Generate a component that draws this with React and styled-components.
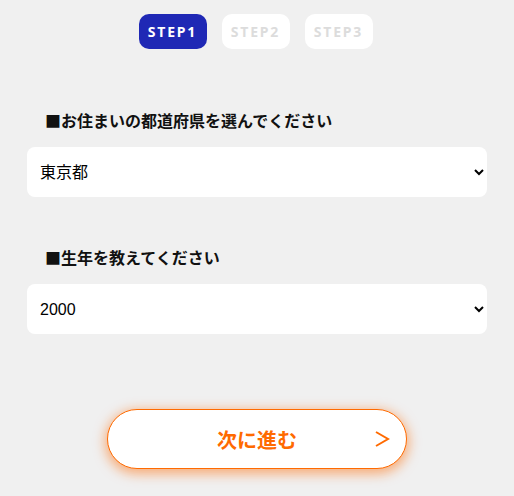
import React from 'react';
import styled, { createGlobalStyle } from 'styled-components';

const Global = createGlobalStyle`
  html, body {
    margin: 0;
    background: #f0f0f0;
    font-family: "Liberation Sans", "Noto Sans CJK JP", sans-serif;
  }
`;

const Page = styled.div`
  width: 514px;
  height: 496px;
  box-sizing: border-box;
  padding: 14px 27px 0 27px;
  display: flex;
  flex-direction: column;
`;

const Steps = styled.div`
  display: flex;
  justify-content: center;
  gap: 15px;
  margin-left: -3px;
`;

const Step = styled.div`
  width: 68px;
  height: 35px;
  border-radius: 10px;
  display: flex;
  align-items: center;
  justify-content: center;
  background: ${p => (p.$active ? '#1f28b5' : '#ffffff')};
  color: ${p => (p.$active ? '#ffffff' : '#dcdcdc')};
  font-family: "Noto Sans", sans-serif;
  font-weight: 700;
  font-size: 14px;
  letter-spacing: 1.8px;
`;

const Field = styled.div`
  display: flex;
  flex-direction: column;
  margin-top: ${p => p.$top}px;
`;

const Label = styled.h2`
  margin: 0 0 15px 18px;
  font-family: "Noto Sans CJK JP", sans-serif;
  font-size: 16px;
  font-weight: 700;
  line-height: 24px;
  color: #111;
`;

const Select = styled.select`
  width: 100%;
  height: 50px;
  border: none;
  border-radius: 8px;
  background: #fff;
  padding: 0 6px 0 9px;
  font-family: "Liberation Sans", "Noto Sans CJK JP", sans-serif;
  font-size: 16px;
  color: #000;
  outline: none;
`;

const Next = styled.button`
  align-self: center;
  margin-top: 75px;
  width: 300px;
  height: 60px;
  border: 1px solid #ff6a00;
  border-radius: 30px;
  background: #fff;
  box-shadow: 0 3px 12px 2px rgba(255, 106, 0, 0.5);
  display: flex;
  align-items: center;
  justify-content: center;
  position: relative;
  color: #ff6a00;
  font-family: "Noto Sans CJK JP", sans-serif;
  font-size: 20px;
  font-weight: 700;
  cursor: pointer;
`;

const Arrow = styled.span`
  position: absolute;
  right: 16px;
  top: 50%;
  transform: translateY(-50%);
  display: flex;
`;

const prefectures = ['北海道', '東京都', '大阪府'];
const years = ['1999', '2000', '2001'];

export default function App() {
  return (
    <>
      <Global />
      <Page>
        <Steps>
          <Step $active>STEP1</Step>
          <Step>STEP2</Step>
          <Step>STEP3</Step>
        </Steps>
        <Field $top={59}>
          <Label>■お住まいの都道府県を選んでください</Label>
          <Select defaultValue="東京都">
            {prefectures.map(p => <option key={p}>{p}</option>)}
          </Select>
        </Field>
        <Field $top={48}>
          <Label>■生年を教えてください</Label>
          <Select defaultValue="2000">
            {years.map(y => <option key={y}>{y}</option>)}
          </Select>
        </Field>
        <Next>
          次に進む
          <Arrow>
            <svg width="16" height="18" viewBox="0 0 16 18" fill="none">
              <path d="M2 2 L14 9 L2 16" stroke="#ff6a00" strokeWidth="2" />
            </svg>
          </Arrow>
        </Next>
      </Page>
    </>
  );
}
